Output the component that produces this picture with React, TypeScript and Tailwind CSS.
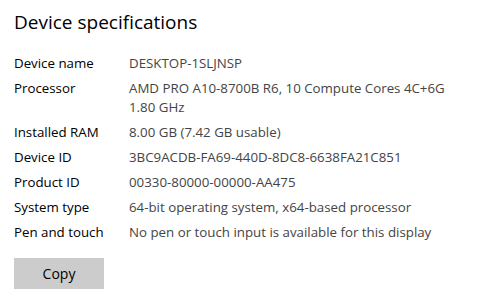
import React from 'react';

const specs: { label: string; value: string[] }[] = [
  { label: 'Device name', value: ['DESKTOP-1SLJNSP'] },
  { label: 'Processor', value: ['AMD PRO A10-8700B R6, 10 Compute Cores 4C+6G', '1.80 GHz'] },
  { label: 'Installed RAM', value: ['8.00 GB (7.42 GB usable)'] },
  { label: 'Device ID', value: ['3BC9ACDB-FA69-440D-8DC8-6638FA21C851'] },
  { label: 'Product ID', value: ['00330-80000-00000-AA475'] },
  { label: 'System type', value: ['64-bit operating system, x64-based processor'] },
  { label: 'Pen and touch', value: ['No pen or touch input is available for this display'] },
];

const App: React.FC = () => {
  return (
    <div className="w-[485px] h-[305px] bg-white pl-[14px] pt-[8px] font-['Segoe_UI','Open_Sans',sans-serif] overflow-hidden">
      <h1 className="text-[19px] leading-[28px] text-black">Device specifications</h1>
      <div className="mt-[18px] flex flex-col gap-[6px] text-[13.3px] leading-[19px]">
        {specs.map((s) => (
          <div key={s.label} className="flex">
            <div className="w-[115px] shrink-0 text-black">{s.label}</div>
            <div className="text-[#444444]">
              {s.value.map((line) => (
                <div key={line}>{line}</div>
              ))}
            </div>
          </div>
        ))}
      </div>
      <button className="mt-[16px] w-[90px] h-[31px] bg-[#cccccc] text-black text-[14px]">Copy</button>
    </div>
  );
};

export default App;
